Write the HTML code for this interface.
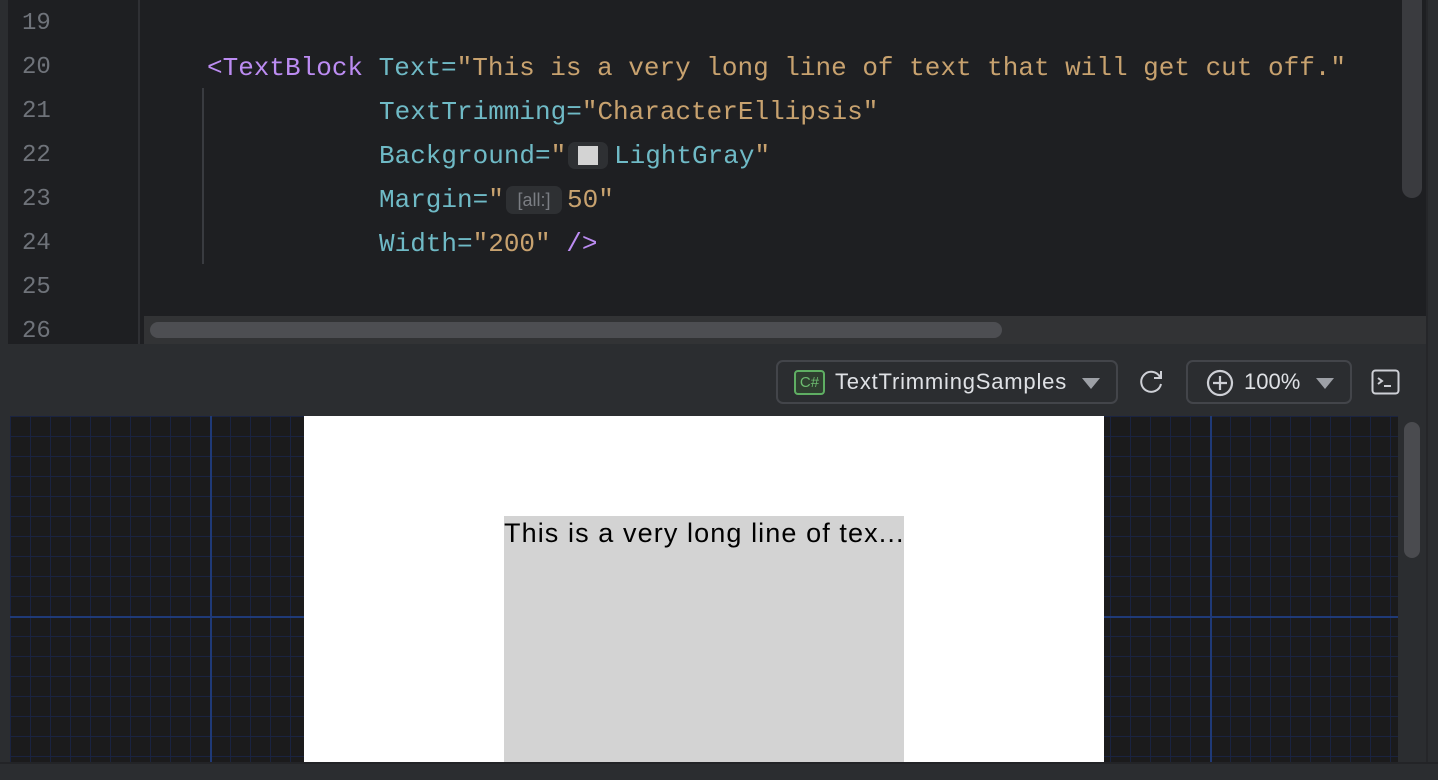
<!DOCTYPE html>
<html><head><meta charset="utf-8"><style>
*{margin:0;padding:0;box-sizing:border-box}
body{width:1438px;height:780px;overflow:hidden;background:#2b2d30;position:relative;font-family:"Liberation Sans",sans-serif}
.abs{position:absolute}
.ln{position:absolute;left:22px;font:24px/44px "Liberation Mono",monospace;color:#6f737a;height:44px}
.cl{position:absolute;font:26px/44px "Liberation Mono",monospace;white-space:pre;height:44px}
.t{color:#bc8cf2}.a{color:#6fbac6}.s{color:#c8a26f}
.grid{background-color:#1b1b1c;background-image:linear-gradient(#1f3a78,#1f3a78),linear-gradient(90deg,#1f3a78,#1f3a78),linear-gradient(#1a2340 1px,transparent 1px),linear-gradient(90deg,#1a2340 1px,transparent 1px);background-size:100% 2px,2px 100%,20px 20px,20px 20px;background-repeat:no-repeat,no-repeat,repeat,repeat}
</style></head><body>
<div class="abs" style="left:8px;top:0;width:1418px;height:344px;background:#1e1f22"></div>
<div class="abs" style="left:138px;top:0;width:2px;height:344px;background:#2f3034"></div>
<div class="abs" style="left:1426px;top:0;width:2px;height:780px;background:#252629"></div>
<div class="ln" style="top:2px">19</div>
<div class="ln" style="top:46px">20</div>
<div class="ln" style="top:90px">21</div>
<div class="ln" style="top:134px">22</div>
<div class="ln" style="top:178px">23</div>
<div class="ln" style="top:222px">24</div>
<div class="ln" style="top:266px">25</div>
<div class="ln" style="top:310px">26</div>
<div class="abs" style="left:202px;top:88px;width:2px;height:176px;background:#393b40"></div>
<div class="cl" style="left:207px;top:46px"><span class="t">&lt;TextBlock</span> <span class="a">Text=</span><span class="s">"This is a very long line of text that will get cut off."</span></div>
<div class="cl" style="left:379px;top:90px"><span class="a">TextTrimming=</span><span class="s">"CharacterEllipsis"</span></div>
<div class="cl" style="left:379px;top:134px"><span class="a">Background=</span><span class="s">"</span></div>
<div class="abs" style="left:568px;top:142px;width:40px;height:27px;border-radius:7px;background:#2e3033"></div>
<div class="abs" style="left:578px;top:146px;width:20px;height:19px;background:#d3d3d3"></div>
<div class="cl" style="left:614px;top:134px"><span class="a">LightGray</span><span class="s">"</span></div>
<div class="cl" style="left:379px;top:178px"><span class="a">Margin=</span><span class="s">"</span></div>
<div class="abs" style="left:506px;top:186px;width:56px;height:28px;border-radius:7px;background:#2e3033;color:#7b7e84;font:18px/28px 'Liberation Sans',sans-serif;text-align:center">[all:]</div>
<div class="cl" style="left:567px;top:178px"><span class="s">50"</span></div>
<div class="cl" style="left:379px;top:222px"><span class="a">Width=</span><span class="s">"200"</span> <span class="t">/&gt;</span></div>
<div class="abs" style="left:1402px;top:0;width:20px;height:198px;border-radius:0 0 10px 10px;background:#3a3b3f"></div>
<div class="abs" style="left:144px;top:316px;width:1282px;height:28px;background:#323335"></div>
<div class="abs" style="left:150px;top:322px;width:852px;height:16px;border-radius:8px;background:#4d4e52"></div>
<div class="abs" style="left:776px;top:360px;width:342px;height:44px;border:2px solid #43454a;border-radius:7px"></div>
<div class="abs" style="left:794px;top:370px;width:31px;height:25px;border:2px solid #5fae63;border-radius:4px;background:#2f3f30;color:#6dbb70;font:15px/21px 'Liberation Sans',sans-serif;text-align:center">C#</div>
<div class="abs" style="left:835px;top:368px;color:#dfe1e5;font:22px/28px 'Liberation Sans',sans-serif;letter-spacing:0.8px">TextTrimmingSamples</div>
<svg class="abs" style="left:1080px;top:376px" width="22" height="14"><path d="M2 2h18l-9 11z" fill="#9da0a6"/></svg>
<svg class="abs" style="left:1138px;top:368px" width="28" height="28" fill="none" stroke="#ced0d6" stroke-width="2"><path d="M22 9a10 10 0 1 0 1 7"/><path d="M23 3v7h-7"/></svg>
<div class="abs" style="left:1186px;top:360px;width:166px;height:44px;border:2px solid #43454a;border-radius:7px"></div>
<svg class="abs" style="left:1206px;top:369px" width="28" height="28" fill="none" stroke="#ced0d6" stroke-width="2.2"><circle cx="14" cy="14" r="12"/><path d="M14 7v14M7 14h14"/></svg>
<div class="abs" style="left:1244px;top:368px;color:#dfe1e5;font:22px/28px 'Liberation Sans',sans-serif">100%</div>
<svg class="abs" style="left:1314px;top:376px" width="22" height="14"><path d="M2 2h18l-9 11z" fill="#9da0a6"/></svg>
<svg class="abs" style="left:1371px;top:369px" width="30" height="26" fill="none" stroke="#ced0d6" stroke-width="2"><rect x="1.5" y="1.5" width="26" height="23" rx="3"/><path d="M7 9l4 3-4 3M13 17h7"/></svg>
<div class="abs grid" style="left:10px;top:416px;width:1388px;height:346px;background-position:0 200px,200px 0,0 0,0 0"></div>
<div class="abs" style="left:1210px;top:416px;width:2px;height:346px;background:#1f3a78"></div>
<div class="abs" style="left:304px;top:416px;width:800px;height:346px;background:#fff"></div>
<div class="abs" style="left:504px;top:516px;width:400px;height:246px;background:#d3d3d3"></div>
<div class="abs" style="left:504px;top:516px;color:#000;font:27px/34px 'Liberation Sans',sans-serif;letter-spacing:1.1px;white-space:nowrap">This is a very long line of tex...</div>
<div class="abs" style="left:1404px;top:422px;width:16px;height:136px;border-radius:8px;background:#4a4b4f"></div>
<div class="abs" style="left:0;top:762px;width:1438px;height:18px;background:#2b2d30;border-top:2px solid #232427"></div>
</body></html>
